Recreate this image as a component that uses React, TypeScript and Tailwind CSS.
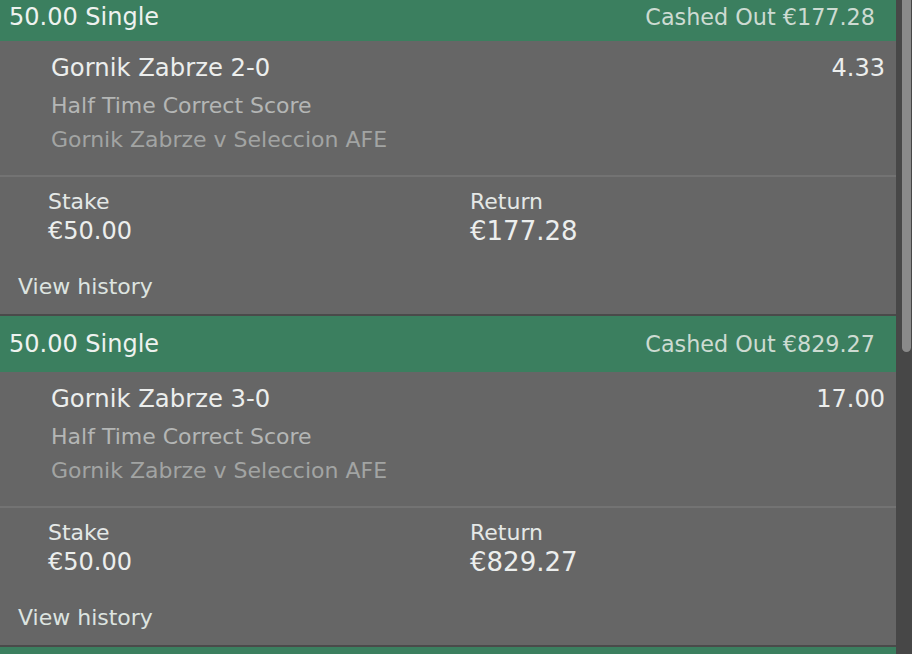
import React from "react";

interface Bet {
  title: string;
  cashedOut: string;
  selection: string;
  odds: string;
  market: string;
  event: string;
  stake: string;
  returns: string;
}

const bets: Bet[] = [
  {
    title: "50.00 Single",
    cashedOut: "€177.28",
    selection: "Gornik Zabrze 2-0",
    odds: "4.33",
    market: "Half Time Correct Score",
    event: "Gornik Zabrze v Seleccion AFE",
    stake: "€50.00",
    returns: "€177.28",
  },
  {
    title: "50.00 Single",
    cashedOut: "€829.27",
    selection: "Gornik Zabrze 3-0",
    odds: "17.00",
    market: "Half Time Correct Score",
    event: "Gornik Zabrze v Seleccion AFE",
    stake: "€50.00",
    returns: "€829.27",
  },
];

function BetHeader({ bet, first }: { bet: Bet; first?: boolean }) {
  // the first header is partly scrolled out of view
  return (
    <div
      className={
        first
          ? "flex h-[41px] shrink-0 items-center justify-between bg-[#3b7f5f] pb-[8px] pl-[9px] pr-[21px]"
          : "flex h-[56px] shrink-0 items-center justify-between bg-[#3b7f5f] pl-[9px] pr-[21px]"
      }
    >
      <span className="text-[24px] leading-[28px] text-[#eef2ef]">{bet.title}</span>
      <span className="text-[22.3px] leading-[28px] text-[#cddbd2]">
        Cashed Out <span>{bet.cashedOut}</span>
      </span>
    </div>
  );
}

function BetCard({ bet, first }: { bet: Bet; first?: boolean }) {
  return (
    <div className="flex flex-col">
      <BetHeader bet={bet} first={first} />
      <div className="flex flex-col border-b-2 border-[#4a4a4a] bg-[#666666]">
        {/* Selection */}
        <div className="flex flex-col border-b-2 border-[#737373] pb-[21px] pl-[51px] pr-[11px] pt-[12px]">
          <div className="flex items-center justify-between">
            <span className="text-[24.3px] leading-[30px] text-[#eceeed]">{bet.selection}</span>
            <span className="text-[24px] leading-[30px] text-[#eceeed]">{bet.odds}</span>
          </div>
          <span className="mt-[9px] text-[22px] leading-[28px] text-[#b4b6b5]">{bet.market}</span>
          <span className="mt-[6px] text-[22px] leading-[28px] text-[#a2a4a3]">{bet.event}</span>
        </div>

        {/* Stake / Return */}
        <div className="flex flex-col pb-[14px] pt-[12px]">
          <div className="flex">
            <div className="flex w-[470px] flex-col pl-[48px]">
              <span className="text-[22px] leading-[26px] text-[#e4e8e6]">Stake</span>
              <span className="mt-[2px] text-[24px] leading-[28px] text-[#eceeed]">{bet.stake}</span>
            </div>
            <div className="flex flex-col">
              <span className="text-[22px] leading-[26px] text-[#e4e8e6]">Return</span>
              <span className="mt-[2px] text-[26px] leading-[28px] text-[#eceeed]">{bet.returns}</span>
            </div>
          </div>
          <a className="mt-[29px] pl-[18px] text-[22px] leading-[26px] text-[#dde4e0]">View history</a>
        </div>
      </div>
    </div>
  );
}

export default function App() {
  return (
    <div
      className="flex h-[654px] w-[912px] overflow-hidden bg-[#666666]"
      style={{ fontFamily: '"DejaVu Sans", Verdana, sans-serif' }}
    >
      {/* Bet list */}
      <div className="flex w-[896px] flex-col overflow-hidden">
        {bets.map((bet, i) => (
          <BetCard key={i} bet={bet} first={i === 0} />
        ))}
        {/* Next bet header, just coming into view */}
        <div className="h-[56px] shrink-0 bg-[#3b7f5f]" />
      </div>

      {/* Scrollbar */}
      <div className="flex w-[16px] flex-col bg-[#474747] pl-[6px] pr-px">
        <div className="h-[352px] w-full rounded-b-[5px] bg-[#8a8a8a]" />
      </div>
    </div>
  );
}
